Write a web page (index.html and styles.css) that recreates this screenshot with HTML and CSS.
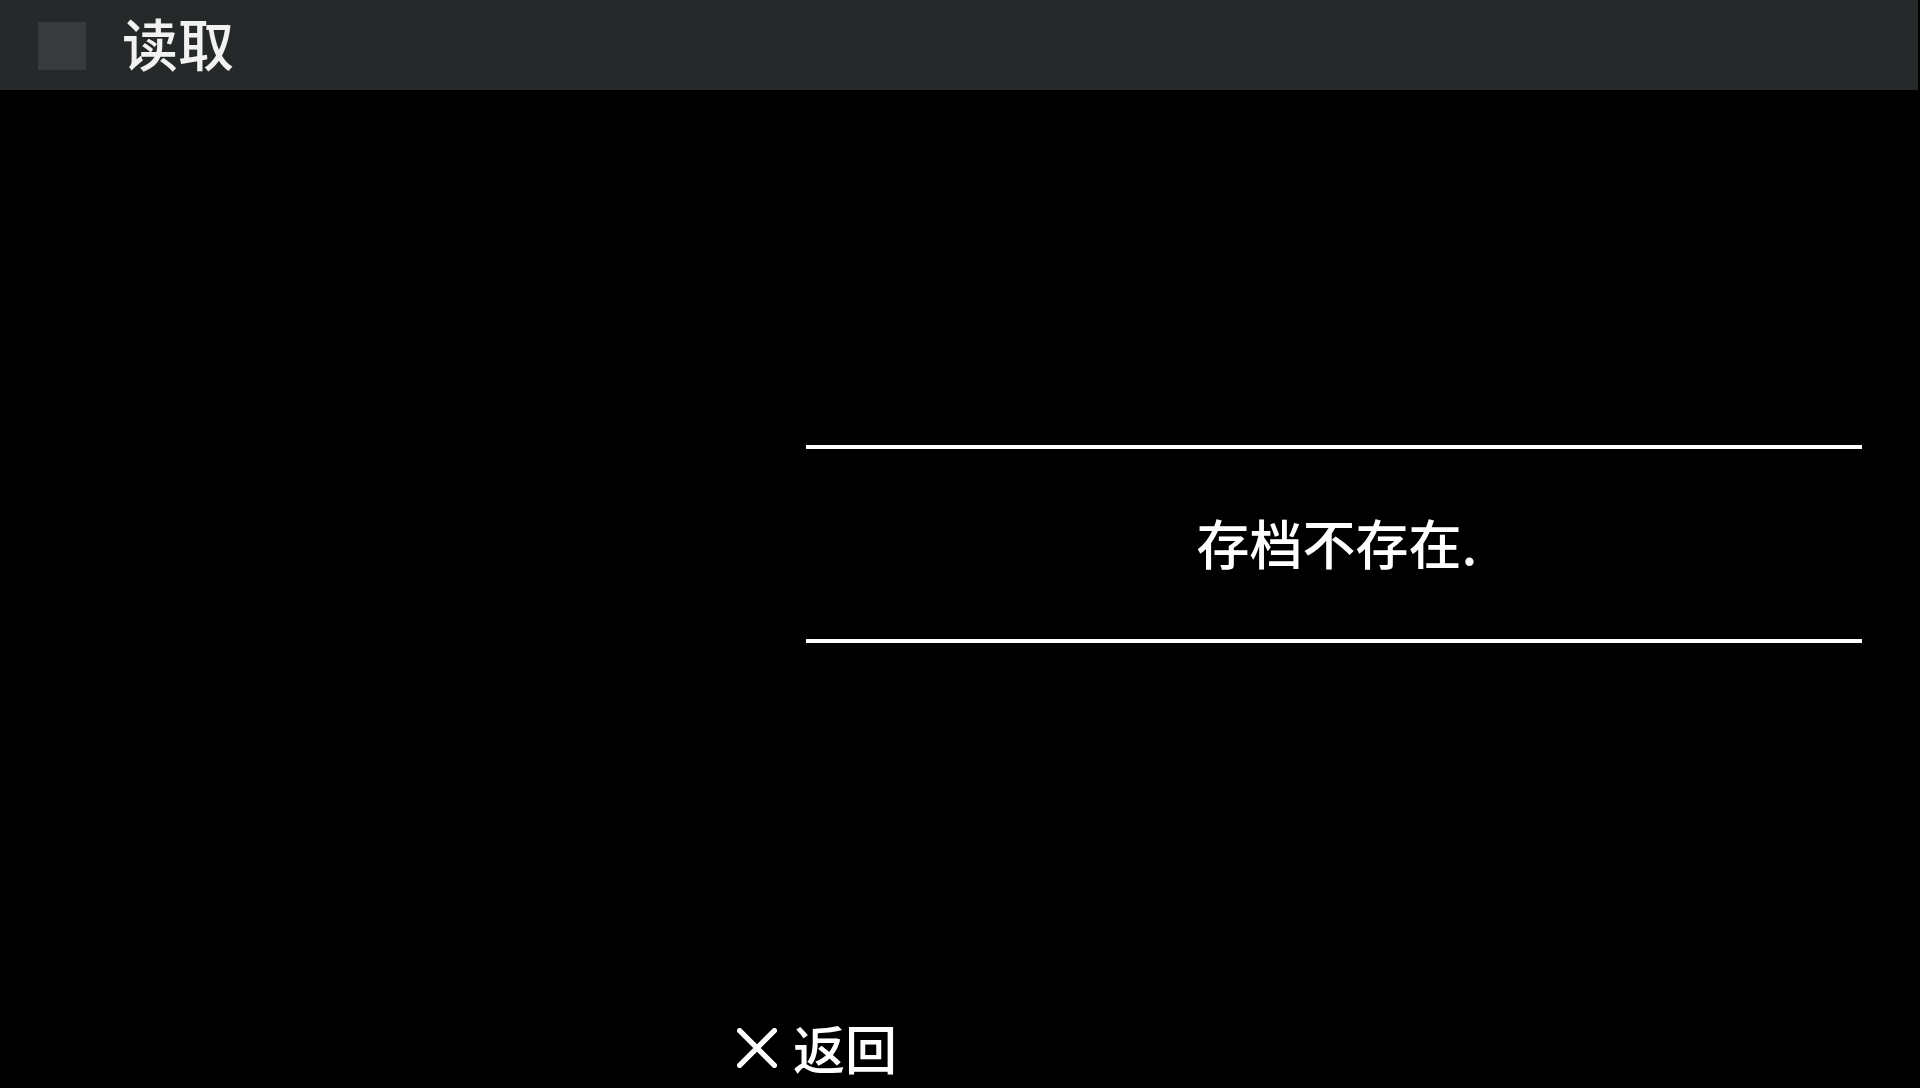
FILE: index.html
```html
<!DOCTYPE html>
<html lang="zh-CN">
<head>
    <meta charset="UTF-8">
    <title>读取</title>
    <link rel="stylesheet" href="styles.css">
</head>
<body>
    <header class="title-bar">
        <div class="title-icon"></div>
        <h1>读取</h1>
    </header>
    <main class="content">
        <div class="message-panel">
            <p>存档不存在.</p>
        </div>
    </main>
    <footer class="bottom-bar">
        <button class="back-btn">
            <svg class="back-icon" viewBox="0 0 38 38">
                <path d="M2.5 2.5L35.5 35.5M35.5 2.5L2.5 35.5"/>
            </svg>
            <span>返回</span>
        </button>
    </footer>
</body>
</html>
```

FILE: styles.css
```css
html, body {
    height: 100%;
}
body {
    margin: 0;
    background-color: #000;
    color: #fff;
    font-family: "Noto Sans CJK SC", "Liberation Sans", sans-serif;
    display: flex;
    flex-direction: column;
    overflow: hidden;
}
.title-bar {
    height: 90px;
    margin-right: 2px;
    padding-left: 38px;
    background-color: #25292a;
    display: flex;
    align-items: center;
    flex-shrink: 0;
}
.title-icon {
    width: 48px;
    height: 48px;
    margin-top: 2px;
    background-color: #383b3c;
}
.title-bar h1 {
    margin: 0 0 6px 36px;
    font-size: 56px;
    font-weight: 500;
    line-height: 84px;
    color: #f2f2f2;
    filter: blur(0.7px);
}
.content {
    flex: 1;
    padding-top: 355px;
    padding-left: 806px;
}
.message-panel {
    width: 1056px;
    height: 188px;
    padding-bottom: 2px;
    border-top: 4px solid #fff;
    border-bottom: 4px solid #fff;
    display: flex;
    align-items: center;
    justify-content: center;
}
.message-panel p {
    margin: 0 0 2px 6px;
    font-size: 53px;
    font-weight: 500;
    line-height: 60px;
    filter: blur(0.7px);
}
.bottom-bar {
    height: 88px;
    padding-top: 7px;
    padding-left: 737px;
    box-sizing: border-box;
    display: flex;
    align-items: center;
    flex-shrink: 0;
}
.back-btn {
    padding: 0;
    border: none;
    background: none;
    color: #fff;
    font: inherit;
    font-size: 52px;
    font-weight: 500;
    line-height: 60px;
    display: flex;
    align-items: center;
    gap: 16px;
}
.back-btn span {
    filter: blur(0.7px);
}
.back-icon {
    width: 40px;
    height: 40px;
    fill: none;
    stroke: #fff;
    stroke-width: 5;
    stroke-linecap: round;
}
```
